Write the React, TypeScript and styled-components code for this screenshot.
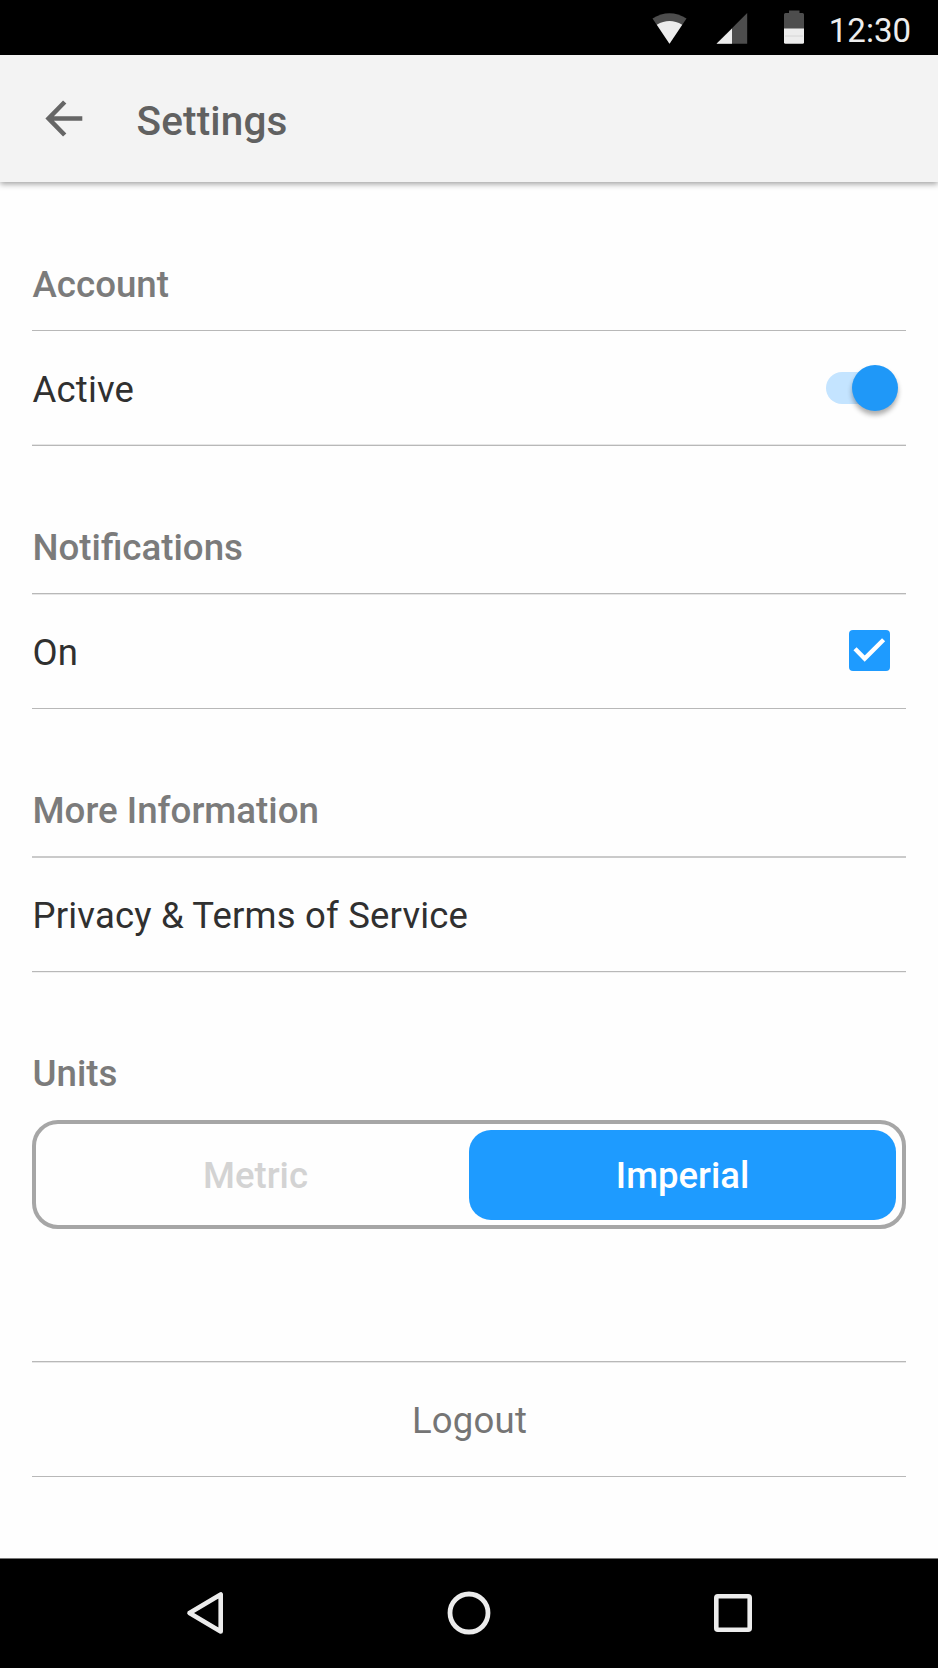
import React, { useState } from 'react';
import styled, { createGlobalStyle } from 'styled-components';

const GlobalStyle = createGlobalStyle`
  * { box-sizing: border-box; }
  body { margin: 0; background: #fefefe; font-family: Roboto, sans-serif; }
  button { font: inherit; border: 0; background: none; padding: 0; margin: 0; }
`;

const Screen = styled.div`
  width: 938px;
  height: 1668px;
  display: flex;
  flex-direction: column;
  background: #fefefe;
  overflow: hidden;
`;

const StatusBar = styled.header`
  height: 55px;
  flex: none;
  display: flex;
  align-items: flex-start;
  justify-content: flex-end;
  padding-right: 27px;
  background: #000;
  color: #ededed;
`;

const StatusIcons = styled.svg`
  width: 156px;
  height: 55px;
  margin-right: 23px;
`;

const Clock = styled.time`
  width: 84px;
  font-size: 33px;
  line-height: 40px;
  padding-top: 11px;
  text-align: right;
`;

const AppBar = styled.div`
  height: 127px;
  flex: none;
  display: flex;
  align-items: center;
  padding-left: 45px;
  background: #f3f3f3;
  box-shadow: 0 2px 6px rgba(0, 0, 0, 0.38);
`;

const BackButton = styled.button`
  width: 38px;
  height: 37px;
  margin: 0 53.500px 1px 0;
  svg { display: block; }
`;

const Title = styled.h1`
  margin: 4px 0 0;
  font-size: 40.5px;
  line-height: 48px;
  font-weight: 500;
  letter-spacing: 0.15px;
  color: #616161;
`;

const Content = styled.main`
  flex: 1;
  display: flex;
  flex-direction: column;
  padding: 0 32px;
`;

const Heading = styled.h2<{ $top: number; $bottom?: number }>`
  margin: 0;
  padding: ${(p) => p.$top}px 0 ${(p) => p.$bottom ?? 21}px 0.5px;
  font-size: 36.7px;
  line-height: 48px;
  font-weight: 500;
  color: #7b7b7b;
`;

const Divider = styled.hr<{ $upper: string; $lower: string }>`
  flex: none;
  width: 100%;
  height: 2px;
  margin: 0;
  border: 0;
  background: linear-gradient(${(p) => p.$upper} 50%, ${(p) => p.$lower} 50%);
`;

const Row = styled.div<{ $height: number; $end?: number }>`
  height: ${(p) => p.$height}px;
  display: flex;
  align-items: center;
  justify-content: space-between;
  padding-right: ${(p) => p.$end ?? 0}px;
`;

const RowLabel = styled.span<{ $top?: number }>`
  padding: ${(p) => p.$top ?? 2}px 0 0 0.5px;
  font-size: 36.5px;
  line-height: 48px;
  letter-spacing: 0.18px;
  color: #303030;
`;

const Switch = styled.button`
  width: 72px;
  height: 46px;
  display: flex;
  align-items: center;
`;

const Track = styled.span`
  width: 72px;
  height: 32px;
  display: flex;
  align-items: center;
  justify-content: flex-end;
  border-radius: 16px;
  background: linear-gradient(90deg, #c4e4ff 50px, transparent 50px);
`;

const Thumb = styled.span`
  width: 46px;
  height: 46px;
  border-radius: 50%;
  background: #1f98f8;
  box-shadow: 0 4px 5px rgba(0, 0, 0, 0.32);
`;

const Checkbox = styled.button`
  width: 41px;
  height: 41px;
  margin-bottom: 2px;
  border-radius: 4px;
  background: #1e9bff;
  svg { display: block; }
`;

const Segmented = styled.div`
  height: 109px;
  display: flex;
  padding: 5.5px 6px 5px;
  border: 4px solid #a6a6a6;
  border-radius: 26px;
`;

const Segment = styled.button<{ $selected: boolean }>`
  flex: 1;
  padding-top: 3px;
  border-radius: 22px;
  font-size: 36.5px;
  line-height: 48px;
  font-weight: 500;
  color: ${(p) => (p.$selected ? '#fff' : '#d3d3d3')};
  background: ${(p) => (p.$selected ? '#1e9bff' : 'transparent')};
`;

const Spacer = styled.div`
  flex: none;
  height: 132px;
`;

const Logout = styled.button`
  height: 113px;
  padding: 3px 0 0 1px;
  font-size: 36.5px;
  line-height: 48px;
  letter-spacing: 0.2px;
  color: #757575;
`;

const NavBar = styled.nav`
  height: 110px;
  flex: none;
  display: flex;
  justify-content: center;
  align-items: center;
  gap: 220px;
  padding-bottom: 1px;
  border-top: 1px solid #777;
  background: #000;
  svg { display: block; flex: none; }
`;

const LINE = '#b8b8b8';
const FAINT = '#e6e6e6';
const CLEAR = 'transparent';

export default function App() {
  const [active, setActive] = useState(true);
  const [notify, setNotify] = useState(true);
  const [unit, setUnit] = useState('Imperial');

  return (
    <Screen>
      <GlobalStyle />
      <StatusBar>
        <StatusIcons viewBox="0 0 156 55">
          <path d="M21.500 43.800 L4.500 18.500 Q21.500 7.800 38.500 18.500Z" fill="#4d4d4d" />
          <path d="M21.500 43.800 L8.800 24.700 Q21.500 17.200 34.200 24.700Z" fill="#ececec" />
          <path d="M68.500 43.800 L99.200 13V43.800Z" fill="#4d4d4d" />
          <path d="M68.500 43.800 L84 28.500V43.800Z" fill="#ececec" />
          <path d="M136 14.500q0-1.500 1.500-1.500H141v-2.500h10.500V13h3q1.500 0 1.500 1.500V29h-20Z" fill="#4d4d4d" />
          <path d="M136 28.500h20v13.800q0 1.500-1.500 1.500h-17q-1.500 0-1.500-1.500Z" fill="#ececec" />
          <path d="M137 36h18" stroke="#d0d0d0" strokeWidth="0.8" />
        </StatusIcons>
        <Clock>12:30</Clock>
      </StatusBar>

      <AppBar>
        <BackButton aria-label="Back">
          <svg width="38" height="37" viewBox="0 0 38 37" fill="none" stroke="#666" strokeWidth="4.600">
            <path d="M19.700 2 L3.600 18.500 L19.700 35 M3.600 18.500H37.300" />
          </svg>
        </BackButton>
        <Title>Settings</Title>
      </AppBar>

      <Content>
        <Heading $top={79}>Account</Heading>
        <Divider $upper={LINE} $lower={CLEAR} />
        <Row $height={112} $end={8}>
          <RowLabel $top={4}>Active</RowLabel>
          <Switch role="switch" aria-checked={active} aria-label="Active" onClick={() => setActive(!active)}>
            <Track><Thumb /></Track>
          </Switch>
        </Row>
        <Divider $upper={FAINT} $lower={LINE} />

        <Heading $top={78}>Notifications</Heading>
        <Divider $upper={LINE} $lower={FAINT} />
        <Row $height={113} $end={16}>
          <RowLabel>On</RowLabel>
          <Checkbox role="checkbox" aria-checked={notify} aria-label="Notifications" onClick={() => setNotify(!notify)}>
            {notify && (
              <svg width="41" height="41" viewBox="0 0 41 41" fill="none" stroke="#fff" strokeWidth="4.400">
                <path d="M6 18.700 L15.700 28.600 L34.600 9.800" />
              </svg>
            )}
          </Checkbox>
        </Row>
        <Divider $upper={LINE} $lower={CLEAR} />

        <Heading $top={77}>More Information</Heading>
        <Divider $upper="#cacaca" $lower="#cacaca" />
        <Row $height={113}>
          <RowLabel>Privacy &amp; Terms of Service</RowLabel>
        </Row>
        <Divider $upper={LINE} $lower="#f0f0f0" />

        <Heading $top={77} $bottom={22}>Units</Heading>
        <Segmented>
          {['Metric', 'Imperial'].map((name) => (
            <Segment key={name} $selected={unit === name} onClick={() => setUnit(name)}>
              {name}
            </Segment>
          ))}
        </Segmented>

        <Spacer />
        <Divider $upper={LINE} $lower={FAINT} />
        <Logout>Logout</Logout>
        <Divider $upper={LINE} $lower={CLEAR} />
      </Content>

      <NavBar>
        <svg width="44" height="44" viewBox="0 0 44 44" fill="none" stroke="#ececec" strokeWidth="4.600" strokeLinejoin="round">
          <path d="M6.500 22 L37.700 3.500V40.500Z" />
        </svg>
        <svg width="44" height="44" viewBox="0 0 44 44" fill="none" stroke="#ececec" strokeWidth="4.800">
          <circle cx="22" cy="22" r="19" />
        </svg>
        <svg width="44" height="44" viewBox="0 0 44 44" fill="none" stroke="#ececec" strokeWidth="4.600">
          <rect x="5.300" y="5.300" width="33.400" height="33.400" rx="1.500" />
        </svg>
      </NavBar>
    </Screen>
  );
}
